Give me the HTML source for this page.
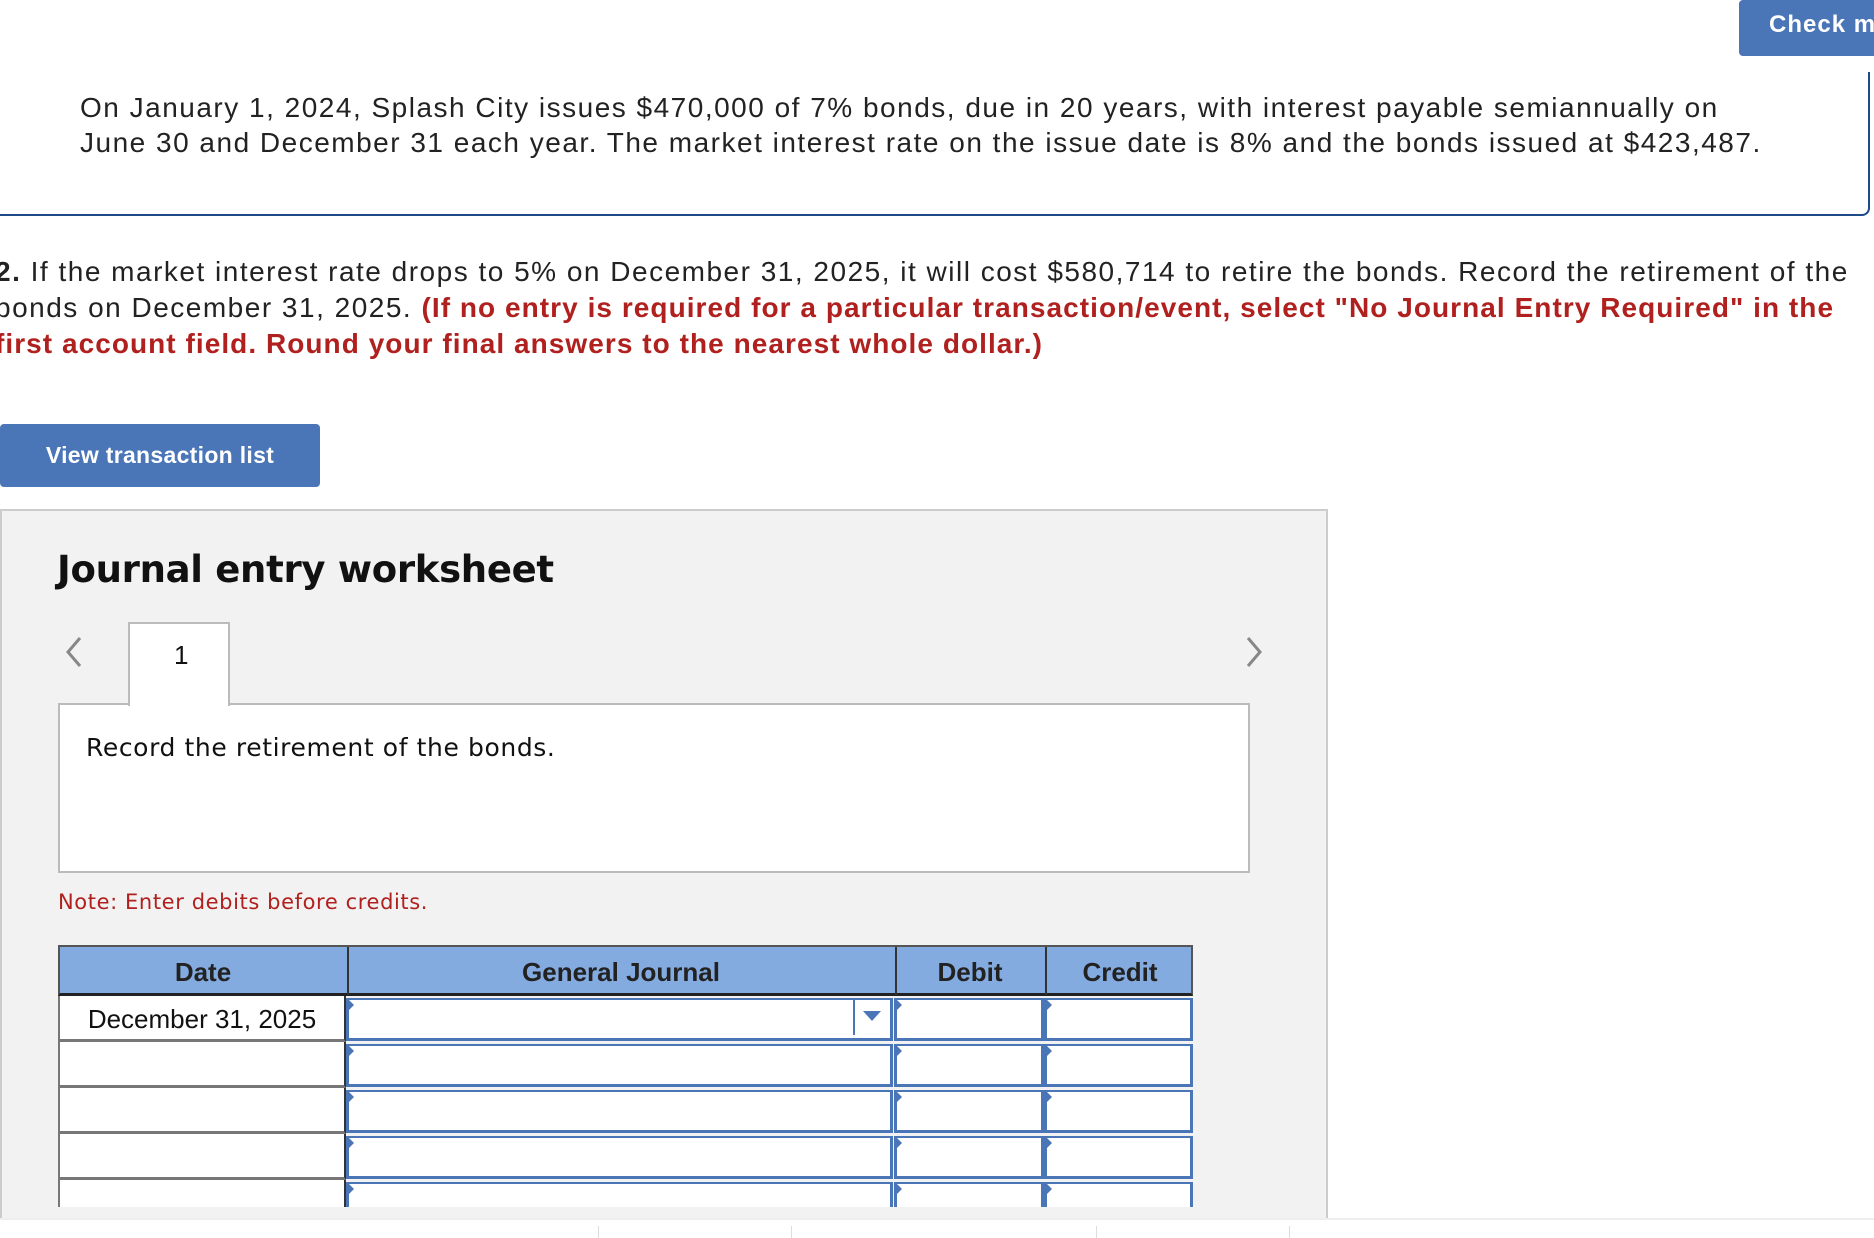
<!DOCTYPE html>
<html><head><meta charset="utf-8"><style>
*{margin:0;padding:0;box-sizing:border-box}
body{width:1874px;height:1238px;overflow:hidden;background:#fff;font-family:"Liberation Sans",Arial,sans-serif;position:relative;color:#222}
.abs{position:absolute}
.btn{background:#4a76b8;color:#fff;font-weight:bold;border-radius:4px}
.red{color:#b0201e;font-weight:bold}
</style></head><body>
<div class="abs btn" style="left:1739px;top:0;width:160px;height:56px;font-size:24px;padding:11px 0 0 30px;border-radius:4px;letter-spacing:1px;white-space:nowrap">Check my</div>
<div class="abs" style="left:-10px;top:72px;width:1880px;height:144px;border-right:2px solid #1f4a8a;border-bottom:2px solid #1f4a8a;border-bottom-right-radius:8px"></div>
<div class="abs" style="left:80px;top:90px;font-size:28px;line-height:35px;color:#222;width:1790px;letter-spacing:1.5px;white-space:nowrap">On January 1, 2024, Splash City issues $470,000 of 7% bonds, due in 20 years, with interest payable semiannually on<br>June 30 and December 31 each year. The market interest rate on the issue date is 8% and the bonds issued at $423,487.</div>
<div class="abs" style="left:-5px;top:254px;font-size:28px;line-height:36px;width:1890px;color:#222;letter-spacing:1.5px;white-space:nowrap"><b>2.</b> If the market interest rate drops to 5% on December 31, 2025, it will cost $580,714 to retire the bonds. Record the retirement of the<br>bonds on December 31, 2025. <span class="red" style="letter-spacing:1.05px">(If no entry is required for a particular transaction/event, select "No Journal Entry Required" in the<br>first account field. Round your final answers to the nearest whole dollar.)</span></div>
<div class="abs btn" style="left:0;top:424px;width:320px;height:63px;font-size:23px;padding-top:18px;text-align:center;letter-spacing:0.3px">View transaction list</div>
<div class="abs" style="left:0;top:509px;width:1328px;height:710px;background:#f2f2f2;border:2px solid #ccc;border-bottom:none"></div>
<div class="abs" style="left:57px;top:548px;font-family:'DejaVu Sans',Verdana,sans-serif;font-weight:bold;font-size:37px;color:#111;letter-spacing:-0.3px">Journal entry worksheet</div>
<svg class="abs" style="left:64px;top:636px" width="20" height="32"><path d="M16 2 L4 16 L16 30" fill="none" stroke="#888" stroke-width="3"/></svg>
<svg class="abs" style="left:1244px;top:636px" width="20" height="32"><path d="M4 2 L16 16 L4 30" fill="none" stroke="#888" stroke-width="3"/></svg>
<div class="abs" style="left:58px;top:703px;width:1192px;height:170px;background:#fff;border:2px solid #bbb"></div>
<div class="abs" style="left:128px;top:622px;width:102px;height:84px;background:#fff;border:2px solid #bbb;border-bottom:none;font-size:26px;padding:16px 0 0 44px;color:#111">1</div>
<div class="abs" style="left:86px;top:733px;font-family:'DejaVu Sans',Verdana,sans-serif;font-size:25px;color:#111;letter-spacing:0.6px">Record the retirement of the bonds.</div>
<div class="abs" style="left:58px;top:890px;font-family:'DejaVu Sans',Verdana,sans-serif;font-size:21px;color:#b0201e;letter-spacing:0.6px">Note: Enter debits before credits.</div>
<div class="abs" style="left:58px;top:945px;width:1135px;height:262px;overflow:hidden">
<div style="position:absolute;left:0;top:0;width:1135px;height:51px;background:#84abe0;border:2px solid #555;border-bottom:3px solid #222;font-weight:bold;font-size:26px;color:#222">
<div class="abs" style="left:0;top:10px;width:286px;text-align:center">Date</div>
<div class="abs" style="left:287px;top:0;width:2px;height:48px;background:#333"></div>
<div class="abs" style="left:287px;top:10px;width:548px;text-align:center">General Journal</div>
<div class="abs" style="left:835px;top:0;width:2px;height:48px;background:#333"></div>
<div class="abs" style="left:835px;top:10px;width:150px;text-align:center">Debit</div>
<div class="abs" style="left:985px;top:0;width:2px;height:48px;background:#333"></div>
<div class="abs" style="left:985px;top:10px;width:150px;text-align:center">Credit</div>
</div>
<div id="rows"></div>
</div>
<script>
var h='';for(var i=0;i<6;i++){var t=51+i*46;
h+='<div style="position:absolute;left:0;top:'+t+'px;width:288px;height:46px;background:#fff;border-left:2px solid #777;border-bottom:3px solid #777;border-right:2px solid #333;font-size:26px;text-align:center;padding-top:8px;color:#111">'+(i==0?'December 31, 2025':'')+'</div>';
[[288,547],[836,150],[986,149]].forEach(function(c){h+='<div style="position:absolute;left:'+c[0]+'px;top:'+(t+2)+'px;width:'+c[1]+'px;height:43px;background:#fff;border:3px solid #4a76b8;border-top-width:2px"></div><div style="position:absolute;left:'+(c[0]+1)+'px;top:'+(t+2)+'px;width:0;height:0;border-top:7px solid transparent;border-bottom:7px solid transparent;border-left:7px solid #4a76b8"></div>';});
}
h+='<div style="position:absolute;left:795px;top:53px;width:2px;height:37px;background:#4a76b8"></div><div style="position:absolute;left:805px;top:66px;border-left:9px solid transparent;border-right:9px solid transparent;border-top:10px solid #4a76b8"></div>';
document.getElementById('rows').innerHTML=h;
</script>
<div class="abs" style="left:0;top:1218px;width:1874px;height:2px;background:#eee"></div>
<div class="abs" style="left:598px;top:1226px;width:1px;height:12px;background:#ddd"></div>
<div class="abs" style="left:791px;top:1226px;width:1px;height:12px;background:#ddd"></div>
<div class="abs" style="left:1096px;top:1226px;width:1px;height:12px;background:#ddd"></div>
<div class="abs" style="left:1289px;top:1226px;width:1px;height:12px;background:#ddd"></div>
</body></html>
